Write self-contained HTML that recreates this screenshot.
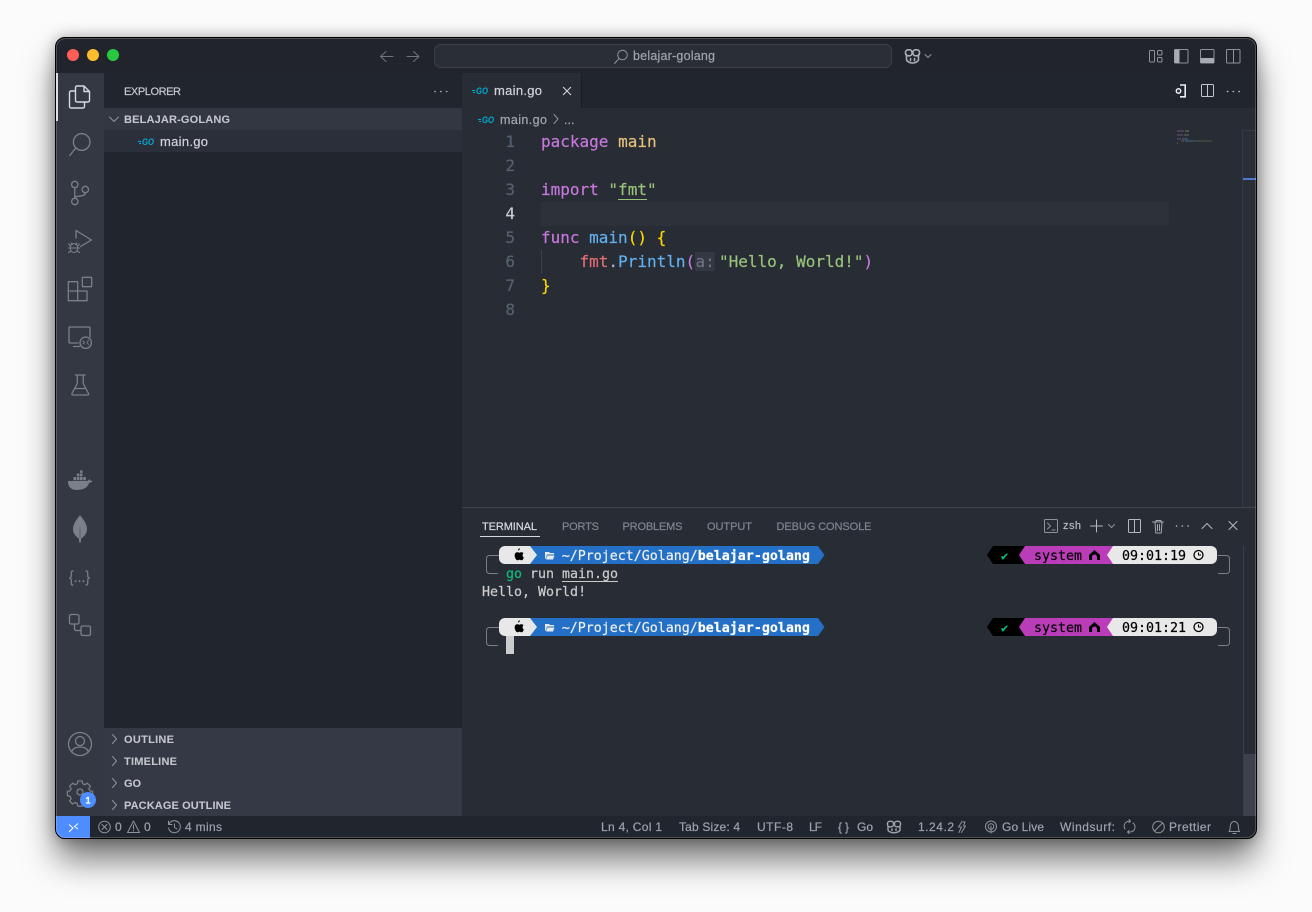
<!DOCTYPE html>
<html><head><meta charset="utf-8"><style>
html,body{margin:0;padding:0;background:#fbfbfb;width:1312px;height:912px;overflow:hidden}
#w{position:absolute;left:55px;top:37px;width:1200px;height:800px;border:1px solid #000;border-radius:10px;box-shadow:0 22px 34px -2px rgba(0,0,0,.55),0 0 15px rgba(0,0,0,.3);background:#21252b}
svg{position:absolute;left:0;top:0}
text,tspan{fill:currentColor;stroke:currentColor;stroke-width:.2}
.u{font-family:"Liberation Sans",sans-serif}
.m{font-family:"DejaVu Sans Mono","Liberation Mono",monospace}
.c{font-size:16px}.t{font-size:13.3px}
.sb{font-size:12px;color:#9da2ac}
.hd{font-size:11px;font-weight:700;color:#c4c7cd;stroke-width:.05}
.pt{font-size:11px;color:#7f848e}
.i{fill:none;stroke:#7b7f88;stroke-width:1.3;stroke-linecap:round;stroke-linejoin:round}
.s{fill:none;stroke:#8e929a;stroke-width:1;stroke-linecap:round;stroke-linejoin:round}
.go{font-family:"Liberation Sans",sans-serif;font-weight:700;font-style:italic;font-size:9px;color:#00acd7;stroke-width:0}
</style></head><body><div id="w"></div>
<svg width="1312" height="912" viewBox="0 0 1312 912" xmlns="http://www.w3.org/2000/svg">
<defs><clipPath id="cw"><rect x="56" y="38" width="1200" height="800" rx="9"/></clipPath></defs>
<g clip-path="url(#cw)">
<rect x="56" y="38" width="1200" height="800" fill="#21252b"/>
<!-- activity -->
<rect x="56" y="73" width="48" height="743" fill="#333842"/>
<rect x="56" y="73" width="2" height="48" fill="#d7dae0"/>
<!-- sidebar -->
<rect x="104" y="73" width="358" height="743" fill="#21252d"/>
<rect x="104" y="108" width="358" height="22" fill="#333742"/>
<rect x="104" y="130" width="358" height="22" fill="#2b2f39"/>
<rect x="104" y="728" width="358" height="88" fill="#353945"/>
<!-- editor -->
<rect x="462" y="73" width="794" height="35" fill="#21252d"/>
<rect x="462" y="73" width="119" height="35" fill="#282c34"/>
<rect x="581" y="73" width="1" height="35" fill="#1a1d23"/>
<rect x="462" y="108" width="794" height="400" fill="#282c34"/>
<rect x="541" y="202" width="628" height="24" fill="#2c313a"/>
<rect x="541" y="250" width="1" height="24" fill="#3b4048"/>
<rect x="1242" y="130" width="14" height="377" fill="#2a2e37"/>
<rect x="1242" y="130" width="1" height="377" fill="#363a44"/>
<rect x="1242" y="130" width="14" height="1" fill="#363a44"/>
<rect x="1243" y="178" width="13" height="2" fill="#4a7bd0"/>
<!-- panel -->
<rect x="462" y="508" width="794" height="308" fill="#282c34"/>
<rect x="462" y="507" width="794" height="1" fill="#3f434c"/>
<rect x="1243" y="546" width="1" height="270" fill="#3a3e48"/>
<rect x="1244" y="754" width="12" height="62" fill="#3c414c"/>
<!-- status -->
<rect x="56" y="816" width="1200" height="22" fill="#21252d"/>
<rect x="56" y="816" width="34" height="22" fill="#4d8dff"/>

<!-- title bar -->
<circle cx="73" cy="55" r="6" fill="#ff5f57"/><circle cx="93" cy="55" r="6" fill="#febc2e"/><circle cx="113" cy="55" r="6" fill="#28c840"/>
<path class="s" style="stroke:#6f737b" d="M381 56.500h12M386 51.500l-5.500 5 5.500 5M407 56.500h12M413.500 51.500l5.500 5-5.500 5"/>
<rect x="434.500" y="44.500" width="457" height="23" rx="6" fill="#2a2e37" stroke="#3a3e48"/>
<circle cx="622.500" cy="55" r="4.800" class="s"/><path class="s" d="M619 58.500l-4.500 5"/>
<text x="633" y="60" class="u" font-size="12.500" color="#a0a4ac" textLength="82">belajar-golang</text>
<g class="s" style="stroke:#a9adb5;stroke-width:1.6"><path d="M906.500 54.500v5c0 1.500 2.500 3.500 6 3.500s6-2 6-3.500v-5"/><rect x="905.500" y="49.800" width="6.500" height="6" rx="2.500"/><rect x="913" y="49.800" width="6.500" height="6" rx="2.500"/><path d="M910.500 58.500v2M914.500 58.500v2"/></g>
<path class="s" d="M925 54.500l3 3 3-3"/>
<rect x="1149.500" y="50.500" width="5" height="11.500" rx="1" class="s"/><rect x="1157.500" y="50.500" width="4.500" height="4.500" rx="1" class="s"/><rect x="1157.500" y="57.500" width="4.500" height="4.500" rx="1" class="s"/>
<rect x="1174.500" y="49.500" width="13.500" height="13.500" rx="1" class="s"/><rect x="1174.500" y="49.500" width="5" height="13.500" fill="#a7abb4"/>
<rect x="1200.500" y="49.500" width="13.500" height="13.500" rx="1" class="s"/><rect x="1200.500" y="58" width="13.500" height="5" fill="#a7abb4"/>
<rect x="1226.500" y="49.500" width="13.500" height="13.500" rx="1" class="s"/><path class="s" d="M1233.500 49.500v13.500"/>

<!-- activity icons -->
<path fill="none" stroke="#d7dae0" stroke-width="1.400" stroke-linejoin="round" d="M75.500 91h-4.500a1.500 1.500 0 0 0-1.500 1.500v14a1.500 1.500 0 0 0 1.500 1.500h12a1.500 1.500 0 0 0 1.500-1.500V102M77 86h7l5.500 5.500v9a1.500 1.500 0 0 1-1.500 1.500H77a1.500 1.500 0 0 1-1.500-1.500V87.500A1.500 1.500 0 0 1 77 86zM84 86v5.500h5.500"/>
<circle cx="81.700" cy="142" r="8.300" class="i"/><path class="i" d="M75.800 148l-6 7.500"/>
<circle cx="74.800" cy="184.500" r="3.200" class="i"/><circle cx="74.800" cy="201.500" r="3.200" class="i"/><circle cx="85.300" cy="189.500" r="3.200" class="i"/><path class="i" d="M74.800 187.700v10.600M85.300 192.700c0 3-4 3.300-6.500 3.500-2 .2-4 .5-4 2"/>
<path class="i" d="M76 238v-7.500l15.500 9.500-11 6.500"/><g class="i" style="stroke-width:1.100"><ellipse cx="74" cy="248" rx="3.800" ry="4.500"/><path d="M70.200 248h7.600M71 243l1.500 1.500M77 243l-1.500 1.500M68.500 244l2 2M79.500 244l-2 2M68.500 248h1.700M77.800 248h1.700M68.500 252.500l2.500-1.500M79.500 252.500l-2.500-1.500"/></g>
<path class="i" d="M68.300 281.700h9.400V291H87v9.700H68.300zM68.300 291h9.400v9.700"/><rect x="82.300" y="277.300" width="9.400" height="9.400" rx=".8" class="i"/>
<path class="i" d="M78 343H70a1 1 0 0 1-1-1v-14a1 1 0 0 1 1-1h19a1 1 0 0 1 1 1v9M73.500 346.500h6"/><circle cx="85.700" cy="342.700" r="5.700" class="i"/><path class="i" style="stroke-width:.9" d="M83 341l1.500 1.500L83 344M88.500 340.500L87 342.500l1.500 2"/>
<path class="i" d="M75.500 375h9.500M77.300 375v8.500l-5.300 10a1 1 0 0 0 1 1.500h14.500a1 1 0 0 0 1-1.500l-5.300-10V375M74.500 388.500h11"/>
<path fill="#7b7f88" d="M68 481h18.500c1.500 0 2.500-1 3-2 .7.700 1 1.200 1 2 .7-.300 1.500-.300 2 0-.7 1.200-2 1.800-3.300 1.800C87.500 488 83 490 77 490c-6 0-9-3-9-9z"/><path fill="#7b7f88" d="M73.500 477h2.600v3.300h-2.600zM76.800 477h2.600v3.300h-2.600zM80 477h2.600v3.300H80zM83.300 477h2.600v3.300h-2.600zM76.800 473.500h2.600v2.800h-2.600zM80 473.500h2.600v2.800H80zM80 470.500h2.600v2.400H80z"/>
<path fill="#7b7f88" d="M80 515c2 3 7 8 7 14 0 5-3.500 8-5.800 9.500l-.7 4.500h-1l-.7-4.500C76.500 537 73 534 73 529c0-6 5-11 7-14z"/><path fill="#5c6069" d="M79.500 527h1v11h-1z"/>
<text x="69" y="582" class="u" font-size="15.500" color="#7b7f88" textLength="21" lengthAdjust="spacingAndGlyphs">{...}</text>
<rect x="69.500" y="614.500" width="9.500" height="9.500" rx="1.500" class="i"/><rect x="81" y="626" width="9.500" height="9.500" rx="1.500" class="i"/><path class="i" d="M74.500 624v5a1.500 1.500 0 0 0 1.500 1.500h5"/>
<circle cx="80" cy="744" r="11.500" class="i"/><circle cx="80" cy="741" r="4.500" class="i"/><path class="i" d="M71.500 752c1-3 4-5 8.500-5s7.500 2 8.500 5"/>
<path class="i" d="M77.800 781h4.400l.6 2.800 2.200.9 2.400-1.500 3 3-1.500 2.400.9 2.200 2.800.6v4.400l-2.800.6-.9 2.200 1.500 2.400-3 3-2.400-1.500-2.200.9-.6 2.800h-4.400l-.6-2.800-2.200-.9-2.400 1.500-3-3 1.500-2.400-.9-2.200-2.800-.6v-4.400l2.800-.6.9-2.200-1.500-2.400 3-3 2.400 1.500 2.200-.9z"/><circle cx="80" cy="792" r="3" class="i"/>
<circle cx="88" cy="800" r="8" fill="#4d8dff"/><text x="88" y="803.500" text-anchor="middle" class="u" font-size="9.500" font-weight="700" color="#fff">1</text>

<!-- sidebar text -->
<text x="124" y="95" class="u" font-size="11" color="#c6c9cf" textLength="57">EXPLORER</text>
<path fill="none" stroke="#b0b4bb" stroke-width="1.600" stroke-linecap="round" stroke-dasharray="0.100 5.700" d="M435 91.500h12"/>
<path class="s" d="M109.500 117l4.500 4.500 4.500-4.500"/>
<text x="124" y="123" class="u hd" textLength="106">BELAJAR-GOLANG</text>
<path stroke="#00acd7" d="M138 141.500h3M139 143.500h2"/><text x="142" y="145" class="go" textLength="12" lengthAdjust="spacingAndGlyphs">GO</text>
<text x="160" y="146" class="u" font-size="13" color="#d0d3d9" textLength="48">main.go</text>
<g class="s"><path d="M112.500 734.500l4 4.500-4 4.500M112.500 756.500l4 4.500-4 4.500M112.500 778.500l4 4.500-4 4.500M112.500 800.500l4 4.500-4 4.500"/></g>
<text x="124" y="743" class="u hd" textLength="50">OUTLINE</text>
<text x="124" y="765" class="u hd" textLength="53">TIMELINE</text>
<text x="124" y="787" class="u hd" textLength="17">GO</text>
<text x="124" y="809" class="u hd" textLength="107">PACKAGE OUTLINE</text>

<!-- tab -->
<path stroke="#00acd7" d="M472 90.500h3M473 92.500h2"/><text x="476" y="94" class="go" textLength="12" lengthAdjust="spacingAndGlyphs">GO</text>
<text x="494" y="95" class="u" font-size="13" color="#d0d3d9" textLength="48">main.go</text>
<path fill="none" stroke="#d0d3d9" stroke-width="1.100" d="M563 87l8 8M571 87l-8 8"/>
<path fill="none" stroke="#eceef1" stroke-width="1.600" d="M1180 85h5.200v11.800H1180"/><circle cx="1178.500" cy="91" r="2.200" fill="none" stroke="#eceef1" stroke-width="1.500"/>
<rect x="1201.500" y="84.500" width="12" height="12" rx="1" fill="none" stroke="#c3c6cc"/><path stroke="#c3c6cc" d="M1207.500 84.500v12"/>
<path fill="none" stroke="#c3c6cc" stroke-width="1.600" stroke-dasharray="0.100 5.700" stroke-linecap="round" d="M1227.500 91.500h12"/>
<!-- breadcrumbs -->
<path stroke="#00acd7" d="M478 119.500h3M479 121.500h2"/><text x="482" y="123" class="go" textLength="12" lengthAdjust="spacingAndGlyphs">GO</text>
<text x="500" y="124" class="u" font-size="12.500" color="#a4a8b0" textLength="47">main.go</text>
<path class="s" d="M554 114.500l4 4.500-4 4.500"/><text x="564" y="124" class="u" font-size="12.500" color="#a4a8b0">...</text>

<!-- code -->
<g class="m c" text-anchor="end" color="#566072">
<text x="515" y="147">1</text><text x="515" y="171">2</text><text x="515" y="195">3</text><text x="515" y="219" color="#c8ccd4">4</text><text x="515" y="243">5</text><text x="515" y="267">6</text><text x="515" y="291">7</text><text x="515" y="315">8</text>
</g>
<g class="m c" xml:space="preserve">
<text x="541" y="147" color="#c678dd">package<tspan color="#e5c07b" dx="9.630">main</tspan></text>
<text x="541" y="195" color="#c678dd">import<tspan color="#98c379" dx="9.630">"fmt"</tspan></text>
<text x="541" y="243" color="#c678dd">func<tspan color="#61afef" dx="9.630">main</tspan><tspan color="#ffd700">()</tspan><tspan color="#ffd700" dx="9.630">{</tspan></text>
<text x="579.500" y="267" color="#e06c75">fmt<tspan color="#abb2bf">.</tspan><tspan color="#61afef">Println</tspan><tspan color="#c678dd">(</tspan></text>
<rect x="695" y="252" width="19.500" height="19" fill="#333842"/>
<text x="695.500" y="267" color="#6b717d">a:</text>
<text x="719" y="267" color="#98c379">"Hello, World!"<tspan color="#c678dd">)</tspan></text>
<text x="541" y="291" color="#ffd700">}</text>
</g>
<rect x="618" y="199" width="29" height="1" fill="#98c379"/>

<!-- minimap -->
<g opacity=".75">
<rect x="1177" y="130.500" width="7" height="1" fill="#8b5a9e"/><rect x="1185" y="130.500" width="4" height="1" fill="#9c8860"/>
<rect x="1177" y="134.500" width="6" height="1" fill="#8b5a9e"/><rect x="1184" y="134.500" width="5" height="1" fill="#6f8a5c"/>
<rect x="1177" y="138.500" width="4" height="1" fill="#8b5a9e"/><rect x="1182" y="138.500" width="6" height="1" fill="#4d80ac"/>
<rect x="1181" y="140.500" width="3" height="1" fill="#a05860"/><rect x="1185" y="140.500" width="8" height="1" fill="#4d80ac"/><rect x="1193" y="140.500" width="19" height="1" fill="#566b4a"/>
<rect x="1177" y="142.500" width="1" height="1" fill="#a89020"/>
</g>

<!-- panel header -->
<g class="u pt"><text x="482" y="530" color="#d7dae0" textLength="55">TERMINAL</text><text x="562" y="530" textLength="37">PORTS</text><text x="622.500" y="530" textLength="60">PROBLEMS</text><text x="707" y="530" textLength="45">OUTPUT</text><text x="776.500" y="530" textLength="95">DEBUG CONSOLE</text></g>
<rect x="480" y="536" width="60" height="1" fill="#d7dae0"/>
<rect x="1044.500" y="519.500" width="13" height="13" rx="1" class="s"/><path class="s" d="M1047.500 523l3 3-3 3M1052 530h3"/>
<text x="1063" y="529" class="u" font-size="11" color="#b4b8bf" textLength="18">zsh</text>
<path class="s" style="stroke:#b4b8bf" d="M1096.500 520v12M1090.500 526h12"/><path class="s" d="M1108.500 524.500l3 3 3-3"/>
<rect x="1128.500" y="519.500" width="12" height="13" rx="1" class="s" style="stroke:#b4b8bf"/><path class="s" style="stroke:#b4b8bf" d="M1134.500 519.500v13"/>
<path class="s" style="stroke:#a5a9b0" d="M1152.500 522h11M1155 522l.8 11h5.400l.8-11M1156 522v-1.500h5V522M1157.500 524.500v6M1159.500 524.500v6"/>
<path fill="none" stroke="#b4b8bf" stroke-width="1.600" stroke-dasharray="0.100 5.700" stroke-linecap="round" d="M1176.500 526h12"/>
<path class="s" style="stroke:#b4b8bf" d="M1202 528.500l5-5 5 5M1229 521.500l8 8M1237 521.500l-8 8"/>

<!-- terminal -->
<g id="pr">
<path class="s" style="stroke:#7c7f85" d="M499 555.500h-9.500a3 3 0 0 0-3 3v12a3 3 0 0 0 3 3h8"/>
<path fill="#2470c7" d="M525 546h293l6.500 9-6.500 9H525z"/>
<path fill="#e8e8e8" d="M505 546h25l7 9-7 9h-25a6 6 0 0 1-6-6v-6a6 6 0 0 1 6-6z"/>
<path fill="#000" d="M518.500 550.500c1-.6 1.400-1.500 1.400-2.300-1 .1-1.900.9-2 2.100.2.100.4.100.6.200zM523.500 553c-1.500-1-2.700-.9-4.300-.2-1.200-.7-3-.8-4 .6-1 1.500-.6 4.200 1 6.100.7.900 1.500 1 2.500.5.800-.4 1.400-.3 2.100.1.900.5 1.700 0 2.400-1.100.3-.5.500-1 .7-1.500-1.700-.9-1.700-3.200-.4-4.500z"/>
<path fill="#e8e8e8" d="M545 552h4l1 1h4v1.500h-7l-1 4h-1zM547.500 555.500h7l-1.500 4h-7z"/>
<text x="561.700" y="560" class="m t" color="#f0f0f0">~/Project/Golang/<tspan font-weight="700" color="#fff">belajar-golang</tspan></text>
<path fill="#000" d="M987 555l6-9h34v18h-34z"/>
<path fill="#bb3cb9" d="M1019 555l6-9h90v18h-90z"/>
<path fill="#e8e8e8" d="M1107 555l6-9h98a6 6 0 0 1 6 6v6a6 6 0 0 1-6 6h-98z"/>
<text x="1001" y="560" class="m" font-size="12" color="#0dbc79">✔</text>
<text x="1034" y="560" class="m t" color="#000">system</text>
<path fill="#000" d="M1089 560v-5l5.500-5 5.500 5v5h-3v-3a2.500 2.500 0 0 0-5 0v3z"/>
<text x="1122" y="560" class="m t" color="#000">09:01:19</text>
<circle cx="1198.500" cy="555" r="4.500" fill="none" stroke="#000" stroke-width="1.300"/><path d="M1198.500 552.500v2.500h2.500" fill="none" stroke="#000"/>
<path class="s" style="stroke:#7c7f85" d="M1218 555.500h8.500a3 3 0 0 1 3 3v12a3 3 0 0 1-3 3h-8"/>
</g>
<text x="506" y="578" class="m t" color="#0dbc79">go</text>
<text x="530" y="578" class="m t" color="#cccccc">run</text>
<text x="562" y="578" class="m t" color="#cccccc">main.go</text>
<rect x="562" y="581" width="56" height="1" fill="#cccccc"/>
<text x="482" y="596" class="m t" color="#cccccc">Hello, World!</text>
<g transform="translate(0 72)">
<path class="s" style="stroke:#7c7f85" d="M499 555.500h-9.500a3 3 0 0 0-3 3v12a3 3 0 0 0 3 3h8"/>
<path fill="#2470c7" d="M525 546h293l6.500 9-6.500 9H525z"/>
<path fill="#e8e8e8" d="M505 546h25l7 9-7 9h-25a6 6 0 0 1-6-6v-6a6 6 0 0 1 6-6z"/>
<path fill="#000" d="M518.500 550.500c1-.6 1.400-1.500 1.400-2.300-1 .1-1.900.9-2 2.100.2.100.4.100.6.200zM523.500 553c-1.500-1-2.700-.9-4.300-.2-1.200-.7-3-.8-4 .6-1 1.500-.6 4.200 1 6.100.7.900 1.500 1 2.500.5.800-.4 1.400-.3 2.100.1.900.5 1.700 0 2.400-1.100.3-.5.500-1 .7-1.500-1.700-.9-1.700-3.200-.4-4.500z"/>
<path fill="#e8e8e8" d="M545 552h4l1 1h4v1.500h-7l-1 4h-1zM547.500 555.500h7l-1.500 4h-7z"/>
<text x="561.700" y="560" class="m t" color="#f0f0f0">~/Project/Golang/<tspan font-weight="700" color="#fff">belajar-golang</tspan></text>
<path fill="#000" d="M987 555l6-9h34v18h-34z"/>
<path fill="#bb3cb9" d="M1019 555l6-9h90v18h-90z"/>
<path fill="#e8e8e8" d="M1107 555l6-9h98a6 6 0 0 1 6 6v6a6 6 0 0 1-6 6h-98z"/>
<text x="1001" y="560" class="m" font-size="12" color="#0dbc79">✔</text>
<text x="1034" y="560" class="m t" color="#000">system</text>
<path fill="#000" d="M1089 560v-5l5.500-5 5.500 5v5h-3v-3a2.500 2.500 0 0 0-5 0v3z"/>
<text x="1122" y="560" class="m t" color="#000">09:01:21</text>
<circle cx="1198.500" cy="555" r="4.500" fill="none" stroke="#000" stroke-width="1.300"/><path d="M1198.500 552.500v2.500h2.500" fill="none" stroke="#000"/>
<path class="s" style="stroke:#7c7f85" d="M1218 555.500h8.500a3 3 0 0 1 3 3v12a3 3 0 0 1-3 3h-8"/>
</g>
<rect x="506" y="636" width="8" height="18" fill="#cccccc"/>

<!-- status bar -->
<path fill="none" stroke="#fff" stroke-width="1" d="M69 824.500l4 3.500-4 4M78 823.500l-3.500 3 3.500 2.500"/>
<circle cx="104.500" cy="827" r="5.800" class="s"/><path class="s" d="M102 824.500l5 5M107 824.500l-5 5"/>
<text x="115" y="831" class="u sb">0</text>
<path class="s" d="M133.500 821l6 11.500h-12zM133.500 825v4M133.500 830.500v.5"/>
<text x="144" y="831" class="u sb">0</text>
<path class="s" d="M169 824a6 6 0 1 1-.5 4M168.500 821v3.500h3.500M174.500 824v3.500l2.500 1.500"/>
<text x="185" y="831" class="u sb" textLength="37">4 mins</text>
<g class="u sb">
<text x="601" y="831" textLength="61">Ln 4, Col 1</text>
<text x="679" y="831" textLength="61">Tab Size: 4</text>
<text x="757" y="831" textLength="36">UTF-8</text>
<text x="809" y="831" textLength="13">LF</text>
<text x="838" y="831" textLength="11">{ }</text>
<text x="857" y="831" textLength="16">Go</text>
<text x="918" y="831" textLength="36">1.24.2</text>
<text x="1002" y="831" textLength="42">Go Live</text>
<text x="1060" y="831" textLength="55">Windsurf:</text>
<text x="1169" y="831" textLength="42">Prettier</text>
</g>
<g class="s" style="stroke:#a0a5ae;stroke-width:1.400"><path d="M888 826.500v3.500c0 1 2.500 2.800 6 2.800s6-1.800 6-2.800v-3.500"/><rect x="887.500" y="821.300" width="6" height="5.500" rx="2.200"/><rect x="894.500" y="821.300" width="6" height="5.500" rx="2.200"/><path d="M892 829v1.500M896 829v1.500"/></g>
<path class="s" d="M962 821.500l-3.500 5.500h3l-2.500 5.500M963 822l2 0-1.500 4h2l-4 6.500"/>
<circle cx="991" cy="826.500" r="5.500" class="s"/><circle cx="991" cy="826.500" r="2.800" class="s"/><path class="s" d="M991 826v7"/>
<path class="s" d="M1125 829a5 5 0 0 1 4-7.800h1M1133 823a5 5 0 0 1-3 9h-2M1129 819.500l1.500 1.700-1.500 1.500M1129 830.500l-1.500 1.500 1.500 1.500"/>
<circle cx="1158.500" cy="827" r="5.800" class="s"/><path class="s" d="M1154.500 831l8-8"/>
<path class="s" d="M1229 831.500c1.500-1.500 1-3.500 1.300-5.500.4-2.500 1.700-4.500 4-4.500s3.600 2 4 4.500c.3 2-.2 4 1.300 5.500zM1233 833.500h3"/>
<rect x="56.500" y="38.500" width="1199" height="799" rx="9" fill="none" stroke="rgba(255,255,255,.2)"/>
</g>
</svg></body></html>
